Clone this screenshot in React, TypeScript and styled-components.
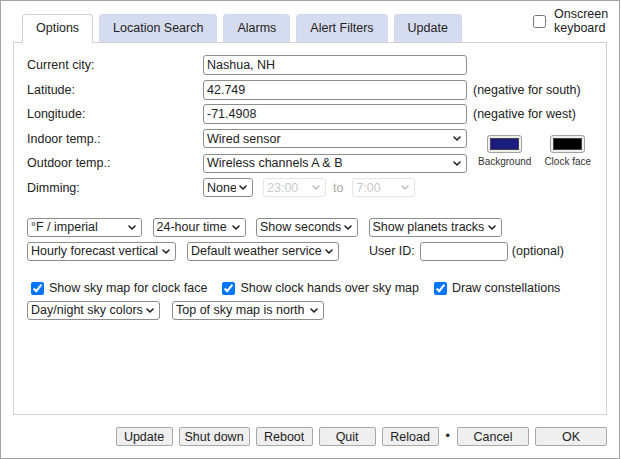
import React from "react";
import styled, { createGlobalStyle } from "styled-components";

const GlobalStyle = createGlobalStyle`
  html, body {
    margin: 0;
    padding: 0;
    background: #fff;
  }
  body {
    font-family: "Liberation Sans", Arial, sans-serif;
    font-size: 12.5px;
    color: #222;
  }
`;

const Window = styled.div`
  box-sizing: border-box;
  width: 620px;
  height: 459px;
  border: 1px solid #a3a3a3;
  padding: 0 12px;
  display: flex;
  flex-direction: column;
`;

const Header = styled.div`
  height: 41px;
  flex: none;
  display: flex;
  align-items: flex-end;
  justify-content: space-between;
  position: relative;
  z-index: 1;
`;

const TabBar = styled.div`
  display: flex;
  gap: 6px;
  margin-left: 9px;
  margin-bottom: -1px;
`;

const Tab = styled.div<{ $active?: boolean }>`
  box-sizing: border-box;
  height: 29px;
  line-height: 27px;
  padding: 0 13px;
  border: 1px solid ${(p) => (p.$active ? "#d0d0d0" : "#d3d9ed")};
  border-bottom-color: ${(p) => (p.$active ? "#fff" : "#d0d0d0")};
  border-radius: 4px 4px 0 0;
  background: ${(p) => (p.$active ? "#fff" : "#d6dcef")};
  color: #222;
  white-space: nowrap;
`;

const KeyboardToggle = styled.label`
  align-self: flex-start;
  margin-top: 7px;
  display: flex;
  align-items: center;
  gap: 8px;
  line-height: 13.5px;
  width: 74px;

  input {
    margin: 0;
  }
`;

const Panel = styled.div`
  flex: 1;
  min-height: 0;
  border: 1px solid #d2d2d2;
  padding: 10px 13px 0;
`;

const Form = styled.div`
  display: grid;
  grid-template-columns: 176px 264px auto;
  grid-auto-rows: 24.5px;
  align-items: center;
`;

const Label = styled.span`
  white-space: nowrap;
`;

const Hint = styled.span`
  padding-left: 6px;
  white-space: nowrap;
`;

const TextInput = styled.input<{ $width: number; $height?: number }>`
  box-sizing: border-box;
  width: ${(p) => p.$width}px;
  height: ${(p) => p.$height ?? 20}px;
  border: 1px solid #8d8d8d;
  border-radius: 3px;
  padding: 0 3px;
  font: inherit;
  color: #222;
  background: #fff;
  outline: none;
`;

const SelectBox = styled.span<{ $width: number; $after?: number }>`
  position: relative;
  display: inline-flex;
  flex: none;
  width: ${(p) => p.$width}px;
  margin-right: ${(p) => p.$after ?? 0}px;
`;

const NativeSelect = styled.select`
  appearance: none;
  -webkit-appearance: none;
  box-sizing: border-box;
  width: 100%;
  height: 19px;
  margin: 0;
  padding: 0 16px 0 3px;
  border: 1px solid #8d8d8d;
  border-radius: 3px;
  background: #fff;
  font: inherit;
  color: #222;
  outline: none;

  &:disabled {
    color: #b3b3b3;
    border-color: #dadada;
  }
`;

const Chevron = styled.svg<{ $disabled?: boolean }>`
  position: absolute;
  right: 6px;
  top: 7px;
  width: 8px;
  height: 5px;
  pointer-events: none;
  stroke: ${(p) => (p.$disabled ? "#c0c0c0" : "#222")};
`;

function Dropdown({
  width,
  options,
  disabled,
  after,
}: {
  width: number;
  options: string[];
  disabled?: boolean;
  after?: number;
}): React.ReactElement {
  return (
    <SelectBox $width={width} $after={after}>
      <NativeSelect disabled={disabled} defaultValue={options[0]}>
        {options.map((o) => (
          <option key={o}>{o}</option>
        ))}
      </NativeSelect>
      <Chevron $disabled={disabled} viewBox="0 0 8 5" fill="none">
        <path d="M1 1l3 3 3-3" strokeWidth="1.6" strokeLinecap="round" strokeLinejoin="round" />
      </Chevron>
    </SelectBox>
  );
}

const Inline = styled.div`
  grid-column: 2 / 4;
  display: flex;
  align-items: center;
`;

const ToLabel = styled.span`
  color: #aaa;
  margin-right: 9px;
`;

const Swatches = styled.div`
  grid-column: 3;
  grid-row: 4 / span 2;
  align-self: center;
  padding-left: 11px;
  display: flex;
  gap: 13px;
`;

const SwatchItem = styled.div`
  display: flex;
  flex-direction: column;
  align-items: center;
  font-size: 10px;
  line-height: 12px;
  color: #333;
  gap: 3px;
`;

const SwatchButton = styled.button`
  box-sizing: border-box;
  width: 35px;
  height: 18px;
  padding: 0;
  border: 1px solid #a2a2a2;
  border-radius: 3px;
  background: #efefef;
  display: flex;
  align-items: center;
  justify-content: center;
`;

const SwatchColor = styled.span<{ $color: string }>`
  width: 27px;
  height: 10px;
  border: 1px solid #444;
  background: ${(p) => p.$color};
`;

const Row = styled.div<{ $gap: number; $top?: number; $height: number }>`
  display: flex;
  align-items: center;
  gap: ${(p) => p.$gap}px;
  height: ${(p) => p.$height}px;
  margin-top: ${(p) => p.$top ?? 0}px;
  white-space: nowrap;
`;

const UserId = styled.span`
  margin-left: 19px;
  margin-right: -6px;
`;

const Optional = styled.span`
  margin-left: -7px;
`;

const Check = styled.label`
  display: flex;
  align-items: center;
  gap: 5px;

  input {
    margin: 0 0 0 4px;
    width: 13px;
    height: 13px;
  }
`;

const Footer = styled.div`
  height: 43px;
  flex: none;
  box-sizing: border-box;
  padding-top: 12px;
  display: flex;
  justify-content: flex-end;
  align-items: flex-start;
  gap: 6px;
`;

const Button = styled.button<{ $wide?: boolean }>`
  box-sizing: border-box;
  height: 19px;
  min-width: ${(p) => (p.$wide ? 72 : 57)}px;
  padding: 0 5px;
  border: 1px solid #a8a8a8;
  border-radius: 2px;
  background: #efefef;
  font: inherit;
  color: #222;
`;

const Dot = styled.span`
  line-height: 19px;
  padding: 0 1px;
`;

const temps = ["Wired sensor", "Wireless channels A & B", "Wireless channel A", "None"];

export default function App(): React.ReactElement {
  return (
    <>
      <GlobalStyle />
      <Window>
        <Header>
          <TabBar>
            <Tab $active>Options</Tab>
            <Tab>Location Search</Tab>
            <Tab>Alarms</Tab>
            <Tab>Alert Filters</Tab>
            <Tab>Update</Tab>
          </TabBar>
          <KeyboardToggle>
            <input type="checkbox" />
            <span>Onscreen keyboard</span>
          </KeyboardToggle>
        </Header>

        <Panel>
          <Form>
            <Label>Current city:</Label>
            <TextInput $width={264} defaultValue="Nashua, NH" />
            <span />

            <Label>Latitude:</Label>
            <TextInput $width={264} defaultValue="42.749" />
            <Hint>(negative for south)</Hint>

            <Label>Longitude:</Label>
            <TextInput $width={264} defaultValue="-71.4908" />
            <Hint>(negative for west)</Hint>

            <Label>Indoor temp.:</Label>
            <Dropdown width={264} options={temps} />
            <Swatches>
              <SwatchItem>
                <SwatchButton>
                  <SwatchColor $color="#1b1c7d" />
                </SwatchButton>
                Background
              </SwatchItem>
              <SwatchItem>
                <SwatchButton>
                  <SwatchColor $color="#000" />
                </SwatchButton>
                Clock face
              </SwatchItem>
            </Swatches>

            <Label>Outdoor temp.:</Label>
            <Dropdown width={264} options={[temps[1], temps[0], temps[2], temps[3]]} />

            <Label>Dimming:</Label>
            <Inline>
              <Dropdown width={50} after={10} options={["None", "50%", "75%"]} />
              <Dropdown width={63} after={7} disabled options={["23:00", "22:00", "21:00"]} />
              <ToLabel>to</ToLabel>
              <Dropdown width={63} disabled options={["7:00", "6:00", "8:00"]} />
            </Inline>
          </Form>

          <Row $gap={10.5} $top={15} $height={24}>
            <Dropdown width={115} options={["°F / imperial", "°C / metric"]} />
            <Dropdown width={93} options={["24-hour time", "12-hour time"]} />
            <Dropdown width={102} options={["Show seconds", "Hide seconds"]} />
            <Dropdown width={133} options={["Show planets tracks", "Hide planets tracks"]} />
          </Row>

          <Row $gap={11} $height={24}>
            <Dropdown width={149} options={["Hourly forecast vertical", "Hourly forecast horizontal"]} />
            <Dropdown width={152} options={["Default weather service"]} />
            <UserId>User ID:</UserId>
            <TextInput $width={88} $height={19} />
            <Optional>(optional)</Optional>
          </Row>

          <Row $gap={11} $top={14} $height={22}>
            <Check>
              <input type="checkbox" defaultChecked />
              Show sky map for clock face
            </Check>
            <Check>
              <input type="checkbox" defaultChecked />
              Show clock hands over sky map
            </Check>
            <Check>
              <input type="checkbox" defaultChecked />
              Draw constellations
            </Check>
          </Row>

          <Row $gap={12} $height={22}>
            <Dropdown width={133} options={["Day/night sky colors", "Always dark sky"]} />
            <Dropdown width={152} options={["Top of sky map is north", "Top of sky map is south"]} />
          </Row>
        </Panel>

        <Footer>
          <Button>Update</Button>
          <Button>Shut down</Button>
          <Button>Reboot</Button>
          <Button>Quit</Button>
          <Button>Reload</Button>
          <Dot>•</Dot>
          <Button $wide>Cancel</Button>
          <Button $wide>OK</Button>
        </Footer>
      </Window>
    </>
  );
}
